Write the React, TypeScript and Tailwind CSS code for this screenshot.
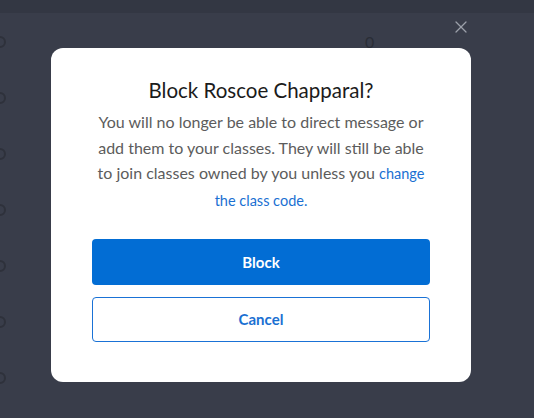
import { X } from "lucide-react";

const font = { fontFamily: "Lato, 'Open Sans', sans-serif" };

export default function App() {
  const rings = [42, 98, 155, 210, 265, 322, 378];
  return (
    <div className="relative h-[418px] w-[534px] overflow-hidden bg-[#393d4a]" style={font}>
      <div className="h-[13px] bg-[#333743]" />

      {/* page behind the overlay */}
      <div className="flex">
        <div className="flex w-[10px] flex-col">
          {rings.map((y, i) => (
            <div key={y} className="-ml-[6px] mt-[23px] mb-[21px] h-[12px] w-[12px] rounded-full border-2 border-[#2e313b]" data-i={i} />
          ))}
        </div>
        <div className="ml-[355px] pt-[20px] text-[16px] leading-[18px] text-[#2a2d36]">0</div>
      </div>

      <button className="absolute left-[451px] top-[17px] text-[#9ca0aa]">
        <X size={20} strokeWidth={1.5} />
      </button>

      <div className="absolute left-[51px] top-[48px] w-[420px] rounded-[12px] bg-white px-[36px] pb-[40px] pt-[28px]">
        <h2 className="text-center text-[20.5px] leading-[28px] font-normal text-[#1b1b1b]">Block Roscoe Chapparal?</h2>
        <p className="mt-[5px] text-center text-[16px] leading-[25.5px] text-[#5c5c5c]">
          You will no longer be able to direct message or
          <br />
          add them to your classes. They will still be able
          <br />
          to join classes owned by you unless you{" "}
          <a className="text-[14.5px] leading-[25.5px] text-[#1a70d2]">
            change
            <br />
            the class code.
          </a>
        </p>
        <div className="mx-[5px] mt-[26px] flex flex-col gap-[12px]">
          <button className="h-[46px] w-full rounded-[4px] bg-[#026dd4] text-[15px] font-bold text-white">Block</button>
          <button className="h-[45px] w-full rounded-[4px] border border-[#1a72d6] bg-white text-[15px] font-bold text-[#1a70d2]">
            Cancel
          </button>
        </div>
      </div>
    </div>
  );
}
